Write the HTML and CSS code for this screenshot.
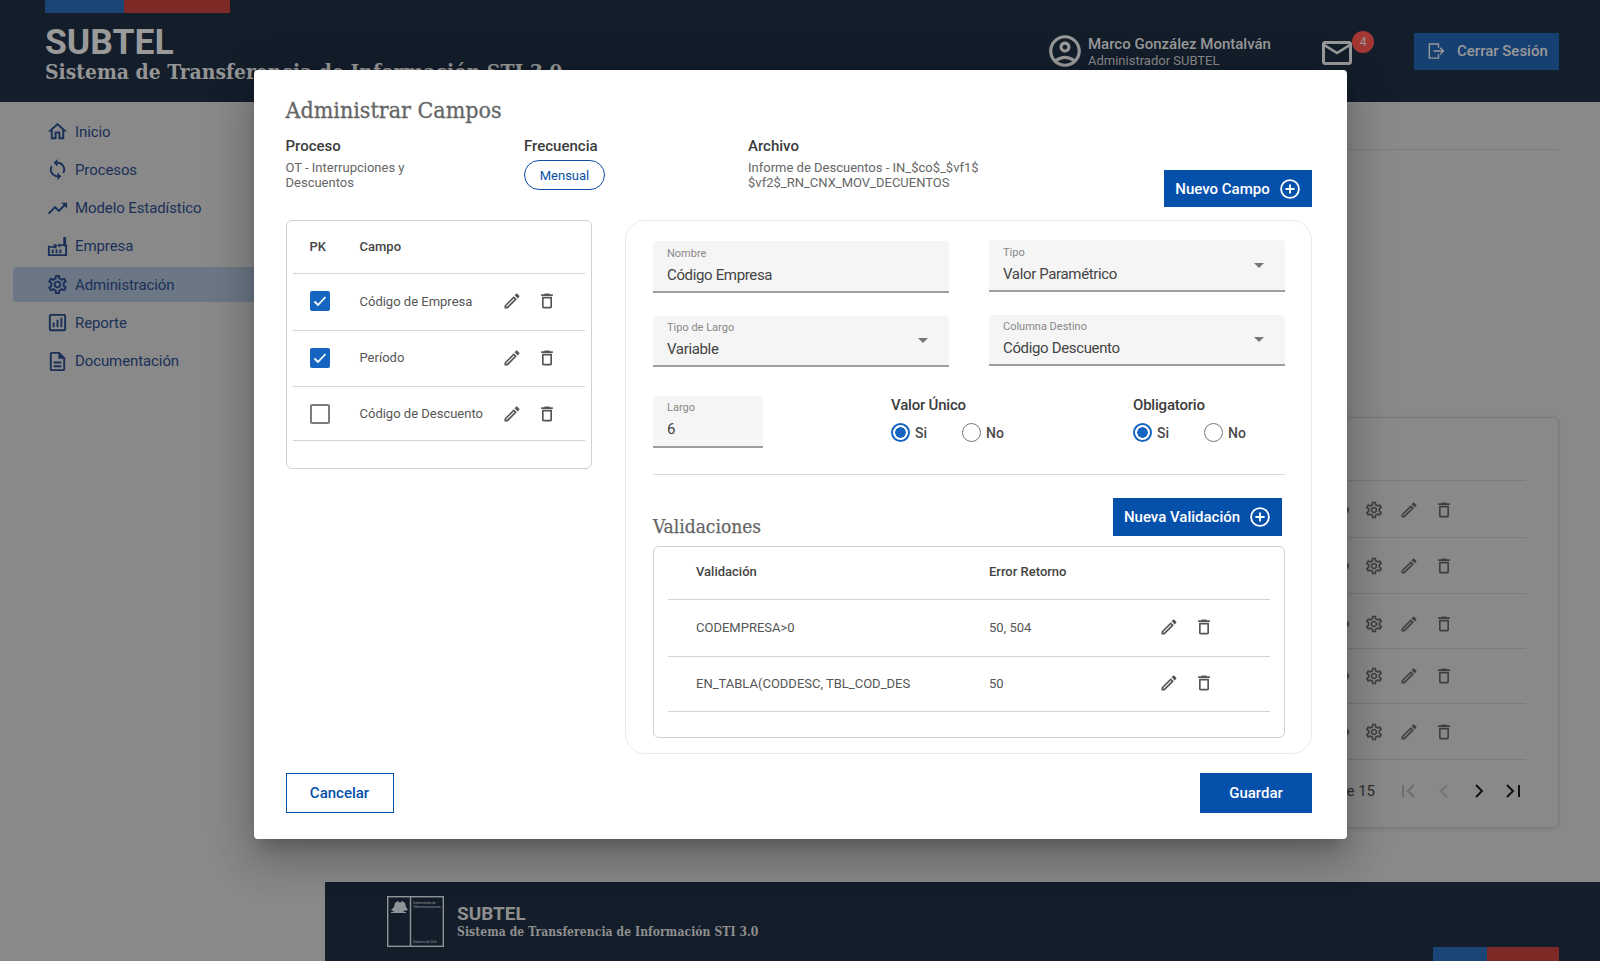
FILE: index.html
```html
<!DOCTYPE html>
<html lang="es">
<head>
    <meta charset="UTF-8">
    <title>Administrar Campos</title>
    <link rel="stylesheet" href="styles.css">
</head>
<body>
<svg class="sprite" xmlns="http://www.w3.org/2000/svg">
    <symbol id="i-edit" viewBox="0 0 24 24"><path d="M14.06 9.02l.92.92L5.92 19H5v-.92l9.06-9.06M17.66 3c-.25 0-.51.1-.7.29l-1.83 1.83 3.75 3.75 1.83-1.83c.39-.39.39-1.02 0-1.41l-2.34-2.34c-.2-.2-.45-.29-.71-.29zm-3.6 3.19L3 17.25V21h3.75L17.81 9.94l-3.75-3.75z"/></symbol>
    <symbol id="i-trash" viewBox="0 0 24 24"><path d="M16 9v10H8V9h8m-1.5-6h-5l-1 1H5v2h14V4h-3.5l-1-1zM18 7H6v12c0 1.1.9 2 2 2h8c1.1 0 2-.9 2-2V7z"/></symbol>
    <symbol id="i-gear" viewBox="0 0 24 24"><path d="M19.43 12.98c.04-.32.07-.64.07-.98 0-.34-.03-.66-.07-.98l2.11-1.65c.19-.15.24-.42.12-.64l-2-3.46c-.09-.16-.26-.25-.44-.25-.06 0-.12.01-.17.03l-2.49 1c-.52-.4-1.08-.73-1.69-.98l-.38-2.65C14.46 2.18 14.25 2 14 2h-4c-.25 0-.46.18-.49.42l-.38 2.65c-.61.25-1.17.59-1.69.98l-2.49-1c-.06-.02-.12-.03-.18-.03-.17 0-.34.09-.43.25l-2 3.46c-.13.22-.07.49.12.64l2.11 1.65c-.04.32-.07.65-.07.98 0 .33.03.66.07.98l-2.11 1.65c-.19.15-.24.42-.12.64l2 3.46c.09.16.26.25.44.25.06 0 .12-.01.17-.03l2.49-1c.52.4 1.08.73 1.69.98l.38 2.65c.03.24.24.42.49.42h4c.25 0 .46-.18.49-.42l.38-2.65c.61-.25 1.17-.59 1.69-.98l2.49 1c.06.02.12.03.18.03.17 0 .34-.09.43-.25l2-3.46c.12-.22.07-.49-.12-.64l-2.11-1.65zm-1.98-1.71c.04.31.05.52.05.73 0 .21-.02.43-.05.73l-.14 1.13.89.7 1.08.84-.7 1.21-1.27-.51-1.04-.42-.9.68c-.43.32-.84.56-1.25.73l-1.06.43-.16 1.13-.2 1.35h-1.4l-.19-1.35-.16-1.13-1.06-.43c-.43-.18-.83-.41-1.23-.71l-.91-.7-1.06.43-1.27.51-.7-1.21 1.08-.84.89-.7-.14-1.13c-.03-.31-.05-.54-.05-.74s.02-.43.05-.73l.14-1.13-.89-.7-1.08-.84.7-1.21 1.27.51 1.04.42.9-.68c.43-.32.84-.56 1.25-.73l1.06-.43.16-1.13.2-1.35h1.39l.19 1.35.16 1.13 1.06.43c.43.18.83.41 1.23.71l.91.7 1.06-.43 1.27-.51.7 1.21-1.07.85-.89.7.14 1.13zM12 8c-2.21 0-4 1.79-4 4s1.79 4 4 4 4-1.79 4-4-1.79-4-4-4zm0 6c-1.1 0-2-.9-2-2s.9-2 2-2 2 .9 2 2-.9 2-2 2z"/></symbol>
    <symbol id="i-home" viewBox="0 0 24 24"><path d="M12 5.69l5 4.5V18h-2v-6H9v6H7v-7.81l5-4.5M12 3L2 12h3v8h6v-6h2v6h6v-8h3L12 3z"/></symbol>
    <symbol id="i-sync" viewBox="0 0 24 24"><path d="M12 4V1L8 5l4 4V6c3.31 0 6 2.69 6 6 0 1.01-.25 1.97-.7 2.8l1.46 1.46C19.54 15.03 20 13.57 20 12c0-4.42-3.58-8-8-8zm0 14c-3.31 0-6-2.69-6-6 0-1.01.25-1.97.7-2.8L5.24 7.74C4.46 8.97 4 10.43 4 12c0 4.42 3.58 8 8 8v3l4-4-4-4v3z"/></symbol>
    <symbol id="i-trend" viewBox="0 0 24 24"><path d="M16 6l2.29 2.29-4.88 4.88-4-4L2 16.59 3.41 18l6-6 4 4 6.3-6.29L22 12V6z"/></symbol>
    <symbol id="i-factory" viewBox="0 0 24 24"><path d="M18 2h3v8h1v12H2V11l6 1V9l5 2V9l5 1zm-14 11v7h16v-8l-5-1v2l-4-2v3l-7-1z"/><path d="M6 15h2v4H6zM10 15h2v4h-2zM14 15h2v4h-2z"/></symbol>
    <symbol id="i-report" viewBox="0 0 24 24"><path d="M19 3H5c-1.1 0-2 .9-2 2v14c0 1.1.9 2 2 2h14c1.1 0 2-.9 2-2V5c0-1.1-.9-2-2-2zm0 16H5V5h14v14z"/><path d="M7 12h2v5H7zM11 9h2v8h-2zM15 7h2v10h-2z"/></symbol>
    <symbol id="i-doc" viewBox="0 0 24 24"><path d="M14 2H6c-1.1 0-2 .9-2 2v16c0 1.1.9 2 2 2h12c1.1 0 2-.9 2-2V8l-6-6zm4 18H6V4h7v5h5v11z"/><path d="M8 12h8v2H8zM8 16h8v2H8z"/></symbol>
    <symbol id="i-eye" viewBox="0 0 24 24"><path d="M12 6a9.8 9.8 0 0 1 9 6 9.8 9.8 0 0 1-18 0 9.8 9.8 0 0 1 9-6zm0 2a7.7 7.7 0 0 0-6.800 4 7.700 7.700 0 0 0 13.600 0A7.700 7.700 0 0 0 12 8zm0 1.500a2.500 2.500 0 1 1 0 5 2.500 2.500 0 0 1 0-5z"/></symbol>
    <symbol id="i-plus" viewBox="0 0 24 24"><circle cx="12" cy="12" r="9.700" fill="none" stroke="currentColor" stroke-width="2"/><path d="M12 7v10M7 12h10" fill="none" stroke="currentColor" stroke-width="2"/></symbol>
</svg>

<div class="page">
    <header class="top">
        <div class="brand">
            <div class="flag"><span class="flag-blue"></span><span class="flag-red"></span></div>
            <div class="brand-name">SUBTEL</div>
            <div class="brand-sub">Sistema de Transferencia de Información STI 3.0</div>
        </div>
        <div class="top-right">
            <svg class="user-icon" viewBox="0 0 24 24"><path d="M12 2C6.480 2 2 6.480 2 12s4.480 10 10 10 10-4.480 10-10S17.520 2 12 2zM7.350 18.500C8.660 17.560 10.260 17 12 17s3.340.560 4.650 1.500c-1.310.940-2.910 1.500-4.650 1.500s-3.340-.560-4.650-1.500zm10.790-1.380C16.450 15.800 14.320 15 12 15s-4.450.800-6.140 2.120C4.700 15.730 4 13.950 4 12c0-4.420 3.580-8 8-8s8 3.580 8 8c0 1.950-.700 3.730-1.860 5.120z"/><path d="M12 6c-1.930 0-3.500 1.570-3.500 3.500S10.070 13 12 13s3.500-1.570 3.500-3.500S13.930 6 12 6zm0 5c-.830 0-1.500-.670-1.500-1.500S11.170 8 12 8s1.500.670 1.500 1.500S12.830 11 12 11z"/></svg>
            <div class="user-text">
                <div class="user-name">Marco González Montalván</div>
                <div class="user-role">Administrador SUBTEL</div>
            </div>
            <div class="mail">
                <svg class="mail-icon" viewBox="0 0 24 24"><path d="M22 6c0-1.100-.900-2-2-2H4c-1.100 0-2 .900-2 2v12c0 1.100.900 2 2 2h16c1.100 0 2-.900 2-2V6zm-2 0l-8 5-8-5h16zm0 12H4V8l8 5 8-5v10z"/></svg>
                <span class="badge">4</span>
            </div>
            <div class="logout">
                <svg class="logout-icon" viewBox="0 0 24 24"><path d="M15 8V3.500H4v17h11V16M9 12h12M17 8l4 4-4 4" fill="none" stroke="currentColor" stroke-width="1.700"/></svg>
                <span>Cerrar Sesión</span>
            </div>
        </div>
    </header>

    <div class="under">
        <nav class="side">
            <a class="nav-item"><svg class="ic"><use href="#i-home"/></svg>Inicio</a>
            <a class="nav-item"><svg class="ic"><use href="#i-sync"/></svg>Procesos</a>
            <a class="nav-item"><svg class="ic"><use href="#i-trend"/></svg>Modelo Estadístico</a>
            <a class="nav-item"><svg class="ic"><use href="#i-factory"/></svg>Empresa</a>
            <a class="nav-item on"><svg class="ic"><use href="#i-gear"/></svg>Administración</a>
            <a class="nav-item"><svg class="ic"><use href="#i-report"/></svg>Reporte</a>
            <a class="nav-item"><svg class="ic"><use href="#i-doc"/></svg>Documentación</a>
        </nav>
        <div class="content">
            <main class="main">
                <div class="main-head"></div>
                <section class="list-card">
                    <div class="list-head"></div>
                    <div class="list-row"><svg class="ic"><use href="#i-eye"/></svg><svg class="ic"><use href="#i-gear"/></svg><svg class="ic"><use href="#i-edit"/></svg><svg class="ic"><use href="#i-trash"/></svg></div>
                    <div class="list-row"><svg class="ic"><use href="#i-eye"/></svg><svg class="ic"><use href="#i-gear"/></svg><svg class="ic"><use href="#i-edit"/></svg><svg class="ic"><use href="#i-trash"/></svg></div>
                    <div class="list-row"><svg class="ic"><use href="#i-eye"/></svg><svg class="ic"><use href="#i-gear"/></svg><svg class="ic"><use href="#i-edit"/></svg><svg class="ic"><use href="#i-trash"/></svg></div>
                    <div class="list-row"><svg class="ic"><use href="#i-eye"/></svg><svg class="ic"><use href="#i-gear"/></svg><svg class="ic"><use href="#i-edit"/></svg><svg class="ic"><use href="#i-trash"/></svg></div>
                    <div class="list-row"><svg class="ic"><use href="#i-eye"/></svg><svg class="ic"><use href="#i-gear"/></svg><svg class="ic"><use href="#i-edit"/></svg><svg class="ic"><use href="#i-trash"/></svg></div>
                    <div class="pager">
                        <span class="pager-text">1 - 5 de 15</span>
                        <svg class="pg off" viewBox="0 0 20 20"><path d="M4 4v12M15 4l-6 6 6 6"/></svg>
                        <svg class="pg off2" viewBox="0 0 20 20"><path d="M13 4l-6 6 6 6"/></svg>
                        <svg class="pg" viewBox="0 0 20 20"><path d="M7 4l6 6-6 6"/></svg>
                        <svg class="pg" viewBox="0 0 20 20"><path d="M3 4l6 6-6 6M15 4v12"/></svg>
                    </div>
                </section>
            </main>
            <footer class="foot">
                <svg class="foot-logo" viewBox="0 0 57 51">
                    <rect x="0.700" y="0.700" width="55.600" height="49.600" fill="none" stroke="#8f9499" stroke-width="1.400"/>
                    <path d="M23.500 1v49" stroke="#8f9499" stroke-width="1.400"/>
                    <path d="M4 14l3-3 1-4 3-2 2 2 2-2 3 2 1 4 2 3-4 1-1 1h-9l-1-1z" fill="#8f9499"/>
                    <path d="M4 16.500h15" stroke="#8f9499"/>
                    <text x="26" y="8" class="logo-txt">Subsecretaría de</text>
                    <text x="26" y="12" class="logo-txt">Telecomunicaciones</text>
                    <text x="26" y="47" class="logo-txt">Gobierno de Chile</text>
                </svg>
                <div class="foot-text">
                    <div class="foot-name">SUBTEL</div>
                    <div class="foot-sub">Sistema de Transferencia de Información STI 3.0</div>
                </div>
                <div class="foot-flag"><span class="flag-blue"></span><span class="flag-red"></span></div>
            </footer>
        </div>
    </div>

    <div class="modal">
        <h2 class="modal-title">Administrar Campos</h2>
        <div class="info">
            <div>
                <div class="info-label">Proceso</div>
                <div class="info-text">OT - Interrupciones y<br>Descuentos</div>
            </div>
            <div>
                <div class="info-label">Frecuencia</div>
                <span class="chip">Mensual</span>
            </div>
            <div>
                <div class="info-label">Archivo</div>
                <div class="info-text">Informe de Descuentos - IN_$co$_$vf1$<br>$vf2$_RN_CNX_MOV_DECUENTOS</div>
            </div>
            <a class="btn btn-new">Nuevo Campo<svg class="plus"><use href="#i-plus"/></svg></a>
        </div>

        <div class="body">
            <section class="fields-card">
                <div class="f-row f-head"><span>PK</span><span>Campo</span></div>
                <div class="f-row">
                    <span class="check on"><svg viewBox="0 0 20 20"><path d="M4.500 10.500l3.500 3.500 7.500-8"/></svg></span>
                    <span>Código de Empresa</span>
                    <svg class="ic"><use href="#i-edit"/></svg><svg class="ic"><use href="#i-trash"/></svg>
                </div>
                <div class="f-row">
                    <span class="check on"><svg viewBox="0 0 20 20"><path d="M4.500 10.500l3.500 3.500 7.500-8"/></svg></span>
                    <span>Período</span>
                    <svg class="ic"><use href="#i-edit"/></svg><svg class="ic"><use href="#i-trash"/></svg>
                </div>
                <div class="f-row">
                    <span class="check"></span>
                    <span>Código de Descuento</span>
                    <svg class="ic"><use href="#i-edit"/></svg><svg class="ic"><use href="#i-trash"/></svg>
                </div>
            </section>

            <section class="panel">
                <div class="form-grid">
                    <div class="form-col first">
                        <div class="field">
                            <div class="field-in"><label>Nombre</label><div class="val">Código Empresa</div></div>
                        </div>
                        <div class="field">
                            <div class="field-in"><label>Tipo de Largo</label><div class="val">Variable</div></div>
                            <i class="arrow"></i>
                        </div>
                    </div>
                    <div class="form-col">
                        <div class="field">
                            <div class="field-in"><label>Tipo</label><div class="val">Valor Paramétrico</div></div>
                            <i class="arrow"></i>
                        </div>
                        <div class="field">
                            <div class="field-in"><label>Columna Destino</label><div class="val">Código Descuento</div></div>
                            <i class="arrow"></i>
                        </div>
                    </div>
                </div>

                <div class="form-row3">
                    <div class="field field-short">
                        <div class="field-in"><label>Largo</label><div class="val">6</div></div>
                    </div>
                    <div class="radio-group">
                        <div class="radio-title">Valor Único</div>
                        <div class="radios">
                            <span class="radio on"></span><span class="radio-text">Si</span>
                            <span class="radio"></span><span class="radio-text">No</span>
                        </div>
                    </div>
                    <div class="radio-group">
                        <div class="radio-title">Obligatorio</div>
                        <div class="radios">
                            <span class="radio on"></span><span class="radio-text">Si</span>
                            <span class="radio"></span><span class="radio-text">No</span>
                        </div>
                    </div>
                </div>

                <div class="val-head">
                    <h3 class="val-title">Validaciones</h3>
                    <a class="btn btn-val">Nueva Validación<svg class="plus"><use href="#i-plus"/></svg></a>
                </div>

                <div class="val-card">
                    <div class="v-row v-head"><span>Validación</span><span>Error Retorno</span></div>
                    <div class="v-row">
                        <span>CODEMPRESA&gt;0</span><span>50, 504</span>
                        <svg class="ic"><use href="#i-edit"/></svg><svg class="ic"><use href="#i-trash"/></svg>
                    </div>
                    <div class="v-row">
                        <span>EN_TABLA(CODDESC, TBL_COD_DES</span><span>50</span>
                        <svg class="ic"><use href="#i-edit"/></svg><svg class="ic"><use href="#i-trash"/></svg>
                    </div>
                </div>
            </section>
        </div>

        <div class="actions">
            <a class="btn btn-cancel">Cancelar</a>
            <a class="btn btn-save">Guardar</a>
        </div>
    </div>
</div>
</body>
</html>
```

FILE: styles.css
```css
*{
    margin: 0;
    padding: 0;
    box-sizing: border-box;
}
html,body{
    width: 100%;
    height: 100%;
    overflow: hidden;
}
body{
    font-family: Roboto, "Liberation Sans", sans-serif;
    background: #898989;
    color: #555;
}
.sprite{
    display: none;
}
.ic{
    width: 20px;
    height: 20px;
    fill: currentColor;
    flex: none;
}
.page{
    position: relative;
    width: 1600px;
    height: 961px;
}

/* barra superior */
.top{
    display: flex;
    justify-content: space-between;
    height: 102px;
    padding: 0 41px 0 45px;
    background: #141e2b;
}
.flag{
    display: flex;
    height: 13px;
}
.flag-blue{
    width: 79px;
    background: #1a4576;
}
.flag-red{
    width: 106px;
    background: #7d2a26;
}
.brand-name{
    margin-top: 9px;
    font-size: 35.500px;
    line-height: 40px;
    font-weight: 700;
    color: #9a9a9a;
}
.brand-sub{
    margin-top: -2px;
    font-family: "DejaVu Serif", serif;
    font-stretch: condensed;
    font-size: 20.900px;
    line-height: 24px;
    font-weight: 700;
    color: #959595;
    white-space: nowrap;
}
.top-right{
    display: flex;
    align-items: center;
    color: #999;
}
.user-icon{
    width: 38px;
    height: 38px;
    fill: #999;
}
.user-text{
    width: 184px;
    margin: 1px 0 0 4px;
}
.user-name{
    font-size: 15px;
    line-height: 18px;
    font-weight: 500;
    white-space: nowrap;
}
.user-role{
    font-size: 13px;
    line-height: 16px;
    color: #8a8a8a;
    white-space: nowrap;
}
.mail{
    position: relative;
    width: 36px;
    height: 36px;
    margin: 4px 59px 0 47px;
}
.mail-icon{
    width: 36px;
    height: 36px;
    fill: #999;
}
.badge{
    position: absolute;
    left: 33px;
    top: -4px;
    width: 22px;
    height: 22px;
    border-radius: 50%;
    background: #a33733;
    font-size: 12px;
    line-height: 22px;
    text-align: center;
    color: #999;
}
.logout{
    display: flex;
    align-items: center;
    width: 145px;
    height: 37px;
    margin-top: 0;
    padding-left: 12px;
    background: #163f72;
    font-size: 15px;
    font-weight: 500;
    color: #999;
}
.logout-icon{
    width: 20px;
    height: 20px;
    margin-right: 11px;
}

/* lo que queda debajo del modal */
.under{
    display: flex;
    height: 859px;
}
.side{
    width: 325px;
    padding: 12px 0 0 13px;
    display: flex;
    flex-direction: column;
    gap: 3.300px;
}
.nav-item{
    display: flex;
    align-items: center;
    gap: 6px;
    height: 35px;
    padding-left: 33px;
    border-radius: 4px 0 0 4px;
    font-size: 15px;
    letter-spacing: -.1px;
    color: #1a3058;
}
.nav-item .ic{
    width: 23px;
    height: 23px;
}
.nav-item.on{
    background: #6c7785;
}
.content{
    flex: 1;
    display: flex;
    flex-direction: column;
}
.main{
    height: 780px;
    padding: 0 41px 0 32px;
}
.main-head{
    height: 48px;
    border-bottom: 1px solid #7c7c7c;
}
.list-card{
    height: 411px;
    margin-top: 267px;
    padding: 0 32px 0 0;
    border: 1px solid #7a7a7a;
    border-radius: 6px;
    box-shadow: 0 1px 3px rgba(0,0,0,.12);
}
.list-head{
    height: 63px;
    border-bottom: 1px solid #7a7a7a;
}
.list-row{
    display: flex;
    justify-content: flex-end;
    align-items: center;
    gap: 15px;
    height: 56px;
    padding-right: 72px;
    border-bottom: 1px solid #7a7a7a;
    color: #3f3f3f;
}
.list-row .ic:first-child{
    margin-right: -3px;
}
.list-row:nth-child(2){
    height: 57px;
    padding-top: 2px;
}
.list-row:nth-child(4){
    height: 55px;
    padding-top: 5px;
}
.list-row:nth-child(5){
    height: 55px;
}
.pager{
    display: flex;
    justify-content: flex-end;
    align-items: center;
    gap: 15px;
    height: 60px;
    padding: 2px 2px 0 0;
}
.pager-text{
    margin-right: 9px;
    font-size: 15px;
    color: #2e2e2e;
}
.pg{
    width: 20px;
    height: 20px;
    fill: none;
    stroke: #111;
    stroke-width: 2;
}
.pg.off{
    stroke: #6e6e6e;
}
.pg.off2{
    stroke: #757575;
}
.foot{
    position: relative;
    flex: 1;
    display: flex;
    align-items: flex-start;
    padding: 14px 0 0 62px;
    background: #141e2b;
}
.foot-logo{
    width: 57px;
    height: 51px;
}
.logo-txt{
    font-family: Roboto, sans-serif;
    font-size: 3px;
    fill: #8f9499;
}
.foot-text{
    margin: 7px 0 0 13px;
}
.foot-name{
    font-size: 19px;
    line-height: 22px;
    font-weight: 700;
    color: #8f8f8f;
}
.foot-sub{
    font-family: "DejaVu Serif", serif;
    font-stretch: condensed;
    font-size: 12px;
    line-height: 15px;
    font-weight: 700;
    letter-spacing: .09px;
    color: #8f8f8f;
    white-space: nowrap;
}
.foot-flag{
    position: absolute;
    right: 41px;
    bottom: 0;
    display: flex;
    height: 14px;
}
.foot-flag .flag-blue{
    width: 54px;
}
.foot-flag .flag-red{
    width: 72px;
}

/* modal */
.modal{
    position: absolute;
    left: 253.500px;
    top: 70px;
    width: 1093.500px;
    height: 769px;
    padding: 25px 35px 26px 32px;
    background: #fff;
    border-radius: 4px;
    box-shadow: 0 11px 15px -7px rgba(0,0,0,.2), 0 24px 38px 3px rgba(0,0,0,.14), 0 9px 46px 8px rgba(0,0,0,.12);
}
.modal-title{
    font-family: "DejaVu Serif", serif;
    font-stretch: condensed;
    font-size: 23px;
    line-height: 30px;
    font-weight: 400;
    -webkit-text-stroke: .3px #666;
    color: #666;
}
.info{
    display: grid;
    grid-template-columns: 238.500px 224px 1fr auto;
    height: 71px;
    margin: 11px 0 13px;
}
.info-label{
    font-size: 15px;
    line-height: 20px;
    font-weight: 500;
    color: #3c3c3c;
}
.info-text{
    margin-top: 4px;
    font-size: 13px;
    line-height: 15px;
    color: #666;
}
.chip{
    display: inline-block;
    width: 81px;
    height: 30px;
    margin-top: 4px;
    border: 1.500px solid #0a4ea6;
    border-radius: 15px;
    font-size: 13px;
    line-height: 29px;
    text-align: center;
    color: #0a4ea6;
}
.btn{
    display: flex;
    align-items: center;
    justify-content: center;
    font-size: 15px;
    font-weight: 500;
    background: #0550ab;
    color: #fff;
}
.plus{
    width: 22px;
    height: 22px;
    margin-left: 9px;
}
.btn-new{
    align-self: end;
    width: 148px;
    height: 37px;
}
.body{
    display: flex;
    gap: 33px;
    height: 534px;
}
.fields-card{
    width: 306.500px;
    height: 249px;
    padding: 0 6px;
    border: 1.500px solid #d0d0d0;
    border-radius: 6px;
}
.f-row{
    display: grid;
    grid-template-columns: 50px 142px 35px 35px;
    align-items: center;
    height: 57px;
    padding: 0 0 2px 17px;
    border-bottom: 1.500px solid #d4d4d4;
    font-size: 13px;
    color: #555;
}
.f-row:nth-child(3){
    height: 56px;
}
.f-row:last-child{
    height: 54px;
    padding-bottom: 0;
}
.f-row.f-head{
    height: 53px;
    font-weight: 500;
    color: #444;
}
.check{
    display: block;
    width: 20px;
    height: 20px;
    border: 2px solid #7b7b7b;
    border-radius: 2px;
}
.check.on{
    border: 0;
    background: #1565c0;
}
.check svg{
    display: block;
    width: 20px;
    height: 20px;
    fill: none;
    stroke: #fff;
    stroke-width: 1.800;
}
.panel{
    width: 687px;
    padding: 0 26px 0 27px;
    border: 1px solid #ebebeb;
    border-radius: 20px;
}
.form-grid{
    display: grid;
    grid-template-columns: 296px 296px;
    gap: 40px;
}
.form-col{
    display: flex;
    flex-direction: column;
    gap: 23px;
    padding-top: 19px;
}
.form-col.first{
    padding-top: 20px;
}
.form-col .field:last-child{
    height: 51px;
}
.form-col .field:first-child .field-in{
    padding-top: 6px;
}
.field{
    display: flex;
    align-items: center;
    height: 52px;
    background: #f5f5f5;
    border-bottom: 2px solid #9e9e9e;
    border-radius: 4px 4px 0 0;
}
.field-in{
    flex: 1;
    height: 100%;
    padding: 5px 0 0 14px;
}
.field label{
    display: block;
    font-size: 11px;
    line-height: 14px;
    color: #888;
}
.val{
    margin-top: 4px;
    font-size: 15px;
    line-height: 20px;
    letter-spacing: -.35px;
    color: #444;
}
.arrow{
    width: 0;
    height: 0;
    margin-right: 21px;
    border-left: 5px solid transparent;
    border-right: 5px solid transparent;
    border-top: 5px solid #777;
}
.form-row3{
    display: grid;
    grid-template-columns: 238px 242px 1fr;
    height: 79px;
    margin-top: 29px;
    border-bottom: 1px solid #d8d8d8;
}
.field-short{
    width: 110px;
}
.radio-title{
    font-size: 15px;
    line-height: 18px;
    font-weight: 500;
    letter-spacing: -.2px;
    color: #3c3c3c;
}
.radios{
    display: flex;
    align-items: center;
    margin-top: 9px;
}
.radio{
    width: 19px;
    height: 19px;
    border: 1.500px solid #777;
    border-radius: 50%;
    background: #fff;
}
.radio.on{
    border: 2px solid #1565c0;
    background: radial-gradient(circle, #1565c0 0 5px, #fff 5.500px);
}
.radio-text{
    width: 52px;
    padding-left: 5px;
    font-size: 14px;
    font-weight: 500;
    color: #4a4a4a;
}
.val-head{
    display: flex;
    justify-content: space-between;
    align-items: flex-start;
    height: 48px;
    margin: 23px 3px 0 0;
}
.val-title{
    margin-top: 16px;
    font-family: "DejaVu Serif", serif;
    font-stretch: condensed;
    font-size: 19px;
    line-height: 24px;
    font-weight: 400;
    -webkit-text-stroke: .25px #666;
    color: #666;
}
.btn-val{
    width: 169px;
    height: 38px;
}
.val-card{
    height: 192px;
    padding: 0 14px;
    border: 1.500px solid #d0d0d0;
    border-radius: 6px;
}
.v-row{
    display: grid;
    grid-template-columns: 293px 170px 35px 35px;
    align-items: center;
    height: 57px;
    padding: 0 0 2px 28px;
    border-bottom: 1.500px solid #d4d4d4;
    font-size: 13px;
    color: #555;
}
.v-row:last-child{
    height: 55px;
}
.v-row.v-head{
    height: 53px;
    padding-bottom: 3px;
    font-weight: 500;
    color: #444;
}
.actions{
    display: flex;
    justify-content: space-between;
    margin-top: 19px;
}
.btn-cancel{
    width: 108px;
    height: 40px;
    background: #fff;
    border: 1px solid #0550ab;
    color: #0550ab;
}
.btn-save{
    width: 112px;
    height: 40px;
}
```
